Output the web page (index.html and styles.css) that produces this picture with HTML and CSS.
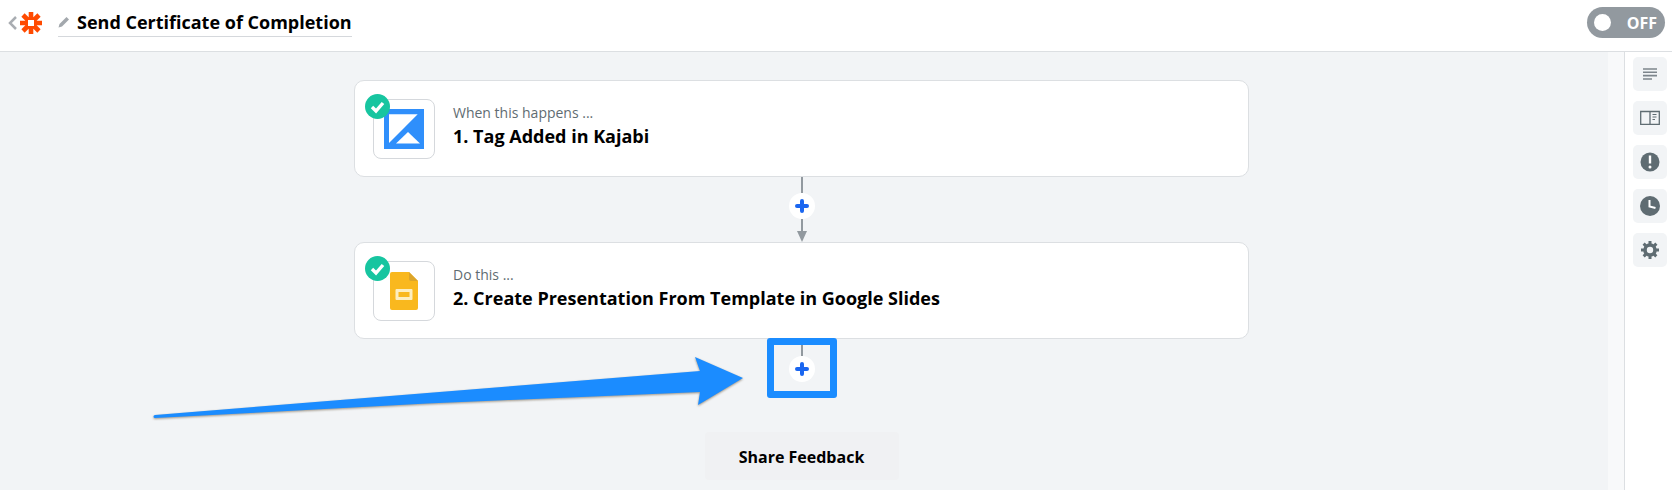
FILE: index.html
```html
<!DOCTYPE html>
<html lang="en">
<head>
  <meta charset="UTF-8">
  <title>Send Certificate of Completion</title>
  <link rel="stylesheet" href="styles.css">
</head>
<body>
  <header class="topbar">
    <div class="topbar-left">
      <svg class="back" width="9" height="14" viewBox="0 0 9 14"><path d="M8 1 2 7l6 6" fill="none" stroke="#a9adb2" stroke-width="2.500"/></svg>
      <svg class="logo" width="24" height="24" viewBox="0 0 24 24">
        <g stroke="#ff4a00" stroke-width="4.600">
          <path d="M12 1v22M1 12h22M4 4l16 16M20 4 4 20"/>
        </g>
        <rect x="9" y="9" width="6" height="6" fill="#fff"/>
      </svg>
      <div class="title">
        <svg width="12" height="12" viewBox="0 0 12 12"><path d="M0.5 11.5 1.5 8 8.500 1l2.500 2.500-7 7z" fill="#a3a8ad"/></svg>
        <span>Send Certificate of Completion</span>
      </div>
    </div>
    <div class="toggle">
      <span class="knob"></span>
      <span>OFF</span>
    </div>
  </header>

  <div class="content">
    <main class="canvas">
      <div class="step">
        <div class="app-icon">
          <svg class="check" width="25" height="25" viewBox="0 0 25 25"><circle cx="12.500" cy="12.500" r="12.500" fill="#17c5a0"/><path d="M7 13l4 4 7-8" fill="none" stroke="#fff" stroke-width="3.400"/></svg>
          <svg width="40" height="40" viewBox="0 0 40 40">
            <rect width="40" height="40" fill="#2f8ffb"/>
            <path d="M5 5.300h28.700L5 34z" fill="#fff"/>
            <path d="M12 34.500h24L24 23z" fill="#fff"/>
          </svg>
        </div>
        <div class="step-text">
          <div class="step-label">When this happens ...</div>
          <div class="step-name">1. Tag Added in Kajabi</div>
        </div>
      </div>

      <div class="connector">
        <span class="line"></span>
        <span class="add">
          <svg width="16" height="16" viewBox="0 0 16 16"><path d="M8 3v10M3 8h10" stroke="#1a66f0" stroke-width="4" stroke-linecap="round"/></svg>
        </span>
        <span class="line long"></span>
        <span class="arrow-tip"></span>
      </div>

      <div class="step">
        <div class="app-icon">
          <svg class="check" width="25" height="25" viewBox="0 0 25 25"><circle cx="12.500" cy="12.500" r="12.500" fill="#17c5a0"/><path d="M7 13l4 4 7-8" fill="none" stroke="#fff" stroke-width="3.400"/></svg>
          <svg width="28" height="38" viewBox="0 0 28 38">
            <path d="M2 0h17l9 9v27a2 2 0 0 1-2 2H2a2 2 0 0 1-2-2V2a2 2 0 0 1 2-2z" fill="#f9b81e"/>
            <path d="M19 0l9 9h-7a2 2 0 0 1-2-2z" fill="#dca52a"/>
            <path d="M6.500 17h15a1 1 0 0 1 1 1v9a1 1 0 0 1-1 1h-15a1 1 0 0 1-1-1v-9a1 1 0 0 1 1-1zM8.500 20v5h11v-5z" fill="#fdeec0" fill-rule="evenodd"/>
          </svg>
        </div>
        <div class="step-text">
          <div class="step-label">Do this ...</div>
          <div class="step-name">2. Create Presentation From Template in Google Slides</div>
        </div>
      </div>

      <div class="connector last">
        <span class="line short"></span>
        <span class="add">
          <svg width="16" height="16" viewBox="0 0 16 16"><path d="M8 3v10M3 8h10" stroke="#1a66f0" stroke-width="4" stroke-linecap="round"/></svg>
        </span>
        <span class="highlight"></span>
      </div>

      <button class="feedback">Share Feedback</button>
    </main>
    <aside class="sidebar">
      <div class="side-btn">
        <svg width="16" height="13" viewBox="0 0 16 13"><path d="M1 1h14M1 4.300h14M1 7.600h14M1 11h9" stroke="#7d858c" stroke-width="1.600"/></svg>
      </div>
      <div class="side-btn">
        <svg width="20" height="16" viewBox="0 0 20 16"><path d="M10 1.500H.7v12.800H10zM10 1.500h9.300v12.800H10z" fill="none" stroke="#5f6c72" stroke-width="1.300"/><path d="M12.500 4.500h4M12.500 7h4M12.500 9.500h2.500" stroke="#5f6c72" stroke-width="1.200"/></svg>
      </div>
      <div class="side-btn">
        <svg width="20" height="20" viewBox="0 0 20 20"><circle cx="10" cy="10" r="9.500" fill="#5f6c72"/><path d="M10 3.500v8" stroke="#fff" stroke-width="2.400"/><circle cx="10" cy="15" r="1.500" fill="#fff"/></svg>
      </div>
      <div class="side-btn">
        <svg width="20" height="20" viewBox="0 0 20 20"><circle cx="10" cy="10" r="10" fill="#5f6c72"/><path d="M9.500 4v6.500l6 1.500" fill="none" stroke="#fff" stroke-width="2"/></svg>
      </div>
      <div class="side-btn">
        <svg width="18" height="18" viewBox="0 0 18 18"><circle cx="9" cy="9" r="5" fill="none" stroke="#5f6c72" stroke-width="3.600"/><path d="M9 0v18M0 9h18M2.600 2.600l12.800 12.800M15.400 2.600 2.600 15.400" stroke="#5f6c72" stroke-width="3" stroke-dasharray="3.200 11.600"/></svg>
      </div>
    </aside>
  </div>

  <!-- annotation arrow drawn over the screenshot -->
  <svg class="annotation" width="1672" height="490" viewBox="0 0 1672 490">
    <path class="arrow" d="M155 415 700 371 695 357 743 378 698 405 700 392 427 403.500 155 418a1.500 1.500 0 0 1 0-3z"/>
  </svg>
</body>
</html>
```

FILE: styles.css
```css
* {
  box-sizing: border-box;
}

html, body {
  height: 490px;
  overflow: hidden;
}

body {
  margin: 0;
  font-family: "Open Sans", sans-serif;
  color: #000;
  background: #f2f4f6;
  position: relative;
}

.topbar {
  height: 52px;
  background: #fff;
  border-bottom: 1px solid #dcdfe2;
  display: flex;
  align-items: center;
  justify-content: space-between;
  padding: 0 7px 6px 8px;
}

.topbar-left {
  display: flex;
  align-items: center;
}

.logo {
  margin-left: 2px;
}

.title {
  margin-left: 15px;
  height: 29px;
  display: flex;
  align-items: center;
  gap: 7px;
  border-bottom: 1px solid #d5d8dc;
  font-size: 18px;
  font-weight: 700;
  padding-bottom: 1px;
}

.toggle {
  width: 78px;
  height: 31px;
  border-radius: 16px;
  background: #92999f;
  color: #fff;
  font-size: 16px;
  font-weight: 700;
  display: flex;
  align-items: center;
  justify-content: space-between;
  padding: 0 8px 0 7px;
}

.knob {
  width: 17px;
  height: 17px;
  border-radius: 50%;
  background: #fff;
}

.content {
  display: flex;
  height: 438px;
}

.canvas {
  flex: 1;
  display: flex;
  flex-direction: column;
  align-items: center;
  padding: 28px 5px 0 0;
  border-right: 16px solid #f8f9fa;
}

.step {
  width: 895px;
  height: 97px;
  background: #fff;
  border: 1px solid #dcdfe2;
  border-radius: 10px;
  display: flex;
  align-items: center;
  padding-left: 18px;
  flex-shrink: 0;
}

.app-icon {
  width: 62px;
  height: 60px;
  border: 1px solid #d5d8dc;
  border-radius: 8px;
  background: #fff;
  display: flex;
  align-items: center;
  justify-content: center;
  position: relative;
}

.check {
  position: absolute;
  left: -9px;
  top: -6px;
  z-index: 1;
}

.step-text {
  margin-left: 18px;
  margin-bottom: 6px;
}

.step-label {
  font-size: 14px;
  line-height: 20px;
  color: #5f6c72;
}

.step-name {
  font-size: 18px;
  font-weight: 700;
  line-height: 26px;
}

.connector {
  height: 65px;
  display: flex;
  flex-direction: column;
  align-items: center;
  flex-shrink: 0;
  position: relative;
}

.line {
  width: 2px;
  height: 16px;
  background: #92999f;
}

.line.long {
  height: 12px;
}

.line.short {
  height: 11px;
  margin-top: 6px;
}

.arrow-tip {
  width: 0;
  height: 0;
  border-left: 5.5px solid transparent;
  border-right: 5.5px solid transparent;
  border-top: 11px solid #92999f;
}

.add {
  width: 26px;
  height: 26px;
  border-radius: 50%;
  background: #fff;
  display: flex;
  align-items: center;
  justify-content: center;
  flex-shrink: 0;
}

.connector.last {
  height: 93px;
}

.highlight {
  position: absolute;
  left: 50%;
  top: -1px;
  width: 70px;
  height: 60px;
  margin-left: -35px;
  border: 7px solid #1b8cff;
  border-radius: 3px;
}

.feedback {
  width: 194px;
  height: 48px;
  background: #f0f1f3;
  border: none;
  border-radius: 4px;
  padding: 2px 0 0;
  font-family: inherit;
  font-size: 16px;
  font-weight: 700;
  color: #000;
  flex-shrink: 0;
}

.sidebar {
  width: 48px;
  border-left: 1px solid #dcdfe2;
  background: #fff;
  display: flex;
  flex-direction: column;
  gap: 10px;
  padding: 5px 0 0 8px;
}

.side-btn {
  width: 34px;
  height: 34px;
  border-radius: 5px;
  background: #f2f4f6;
  display: flex;
  align-items: center;
  justify-content: center;
}

.annotation {
  position: absolute;
  left: 0;
  top: 0;
  pointer-events: none;
}

.arrow {
  fill: #1b8cff;
  filter: drop-shadow(0 1px 1px rgba(90, 70, 40, .55));
}
```
